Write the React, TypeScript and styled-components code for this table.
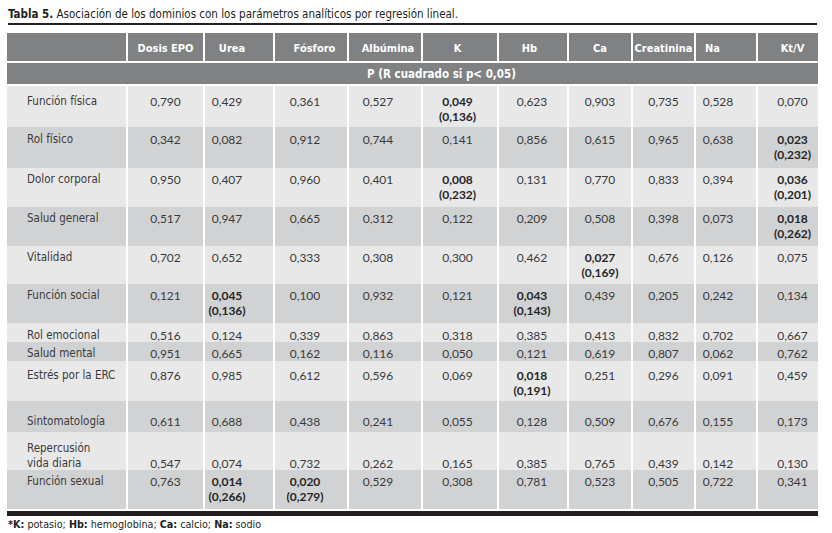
import React from "react";
import styled, { createGlobalStyle } from "styled-components";

const COND = `"DejaVu Sans Condensed", "DejaVu Sans", sans-serif`;
const NUM = `Lato, "Open Sans", sans-serif`;
const COLS = "119px 75px 68px 72px 72px 74px 68px 62px 61px 60px 60px";

const GlobalStyle = createGlobalStyle`
  html, body { margin: 0; padding: 0; background: #ffffff; }
  body { font-family: ${COND}; color: #3a3a3a; }
`;

const Page = styled.div`
  width: 811px;
  padding: 6px 0 0 7px;
`;

const Title = styled.div`
  margin-left: 1px;
  font-family: ${COND};
  font-stretch: condensed;
  font-size: 11.5px;
  line-height: 16px;
  color: #231f20;
  padding-bottom: 1px;
  border-bottom: 2px solid #231f20;
  width: 809px;
  b { font-weight: 700; }
`;

const Table = styled.div`
  margin-top: 8px;
  display: flex;
  flex-direction: column;
`;

const HeadRow = styled.div`
  display: grid;
  grid-template-columns: ${COLS};
  column-gap: 2px;
  height: 28px;
`;

const HeadCell = styled.div<{ $shift?: number }>`
  background: #808183;
  color: #ffffff;
  font-family: ${COND};
  font-stretch: condensed;
  font-weight: 700;
  font-size: 11px;
  display: flex;
  align-items: center;
  justify-content: center;
  padding-top: 3px;
  box-sizing: border-box;
  padding-left: ${(p) => Math.max(0, (p.$shift ?? 0) * 2)}px;
  padding-right: ${(p) => Math.max(0, -(p.$shift ?? 0) * 2)}px;
  white-space: nowrap;
`;

const SubHead = styled.div`
  margin-top: 2px;
  height: 21px;
  background: #808183;
  color: #ffffff;
  font-family: ${COND};
  font-stretch: condensed;
  font-weight: 700;
  font-size: 11.5px;
  display: flex;
  align-items: center;
  justify-content: center;
  padding-left: 58px;
  padding-top: 1px;
  box-sizing: border-box;
`;

const Body = styled.div`
  margin-top: 2px;
  display: flex;
  flex-direction: column;
`;

const Row = styled.div<{ $h: number }>`
  display: grid;
  grid-template-columns: ${COLS};
  column-gap: 2px;
  height: ${(p) => p.$h}px;
`;

const LabelCell = styled.div<{ $bg: string; $pt: number }>`
  background: ${(p) => p.$bg};
  padding: ${(p) => p.$pt}px 0 0 20px;
  font-family: ${COND};
  font-stretch: condensed;
  font-size: 11.5px;
  line-height: 15px;
  color: #3a3a3a;
  white-space: pre;
  box-sizing: border-box;
  overflow: visible;
`;

const NumCell = styled.div<{ $bg: string; $pt: number; $shift: number }>`
  background: ${(p) => p.$bg};
  padding-top: ${(p) => p.$pt}px;
  padding-left: ${(p) => Math.max(0, p.$shift * 2)}px;
  padding-right: ${(p) => Math.max(0, -p.$shift * 2)}px;
  text-align: center;
  font-family: ${NUM};
  font-size: 12px;
  line-height: 15px;
  color: #3a3a3a;
  box-sizing: border-box;
  white-space: nowrap;
`;

const Strong = styled.span`
  font-weight: 700;
  color: #262626;
`;

const Bar = styled.div`
  margin-top: 2px;
  height: 5px;
  background: #231f20;
`;

const Foot = styled.div`
  margin: 2px 0 0 1px;
  font-family: ${COND};
  font-stretch: condensed;
  font-size: 10.7px;
  line-height: 14px;
  color: #231f20;
  b { font-weight: 700; }
`;

type Val = string | [string, string];

interface RowData {
  label: string;
  h: number;
  pt: number;
  nt?: number;
  vals: Val[];
}

const headers = [
  { t: "Dosis EPO", hs: 0, bs: 0 },
  { t: "Urea", hs: -7, bs: -12 },
  { t: "Fósforo", hs: 3.5, bs: -6 },
  { t: "Albúmina", hs: 3, bs: -7 },
  { t: "K", hs: -2.5, bs: -2.5 },
  { t: "Hb", hs: -3.5, bs: -1 },
  { t: "Ca", hs: 0, bs: 0 },
  { t: "Creatinina", hs: 0, bs: 0 },
  { t: "Na", hs: -13.5, bs: -8 },
  { t: "Kt/V", hs: 4.5, bs: 4.5 },
];

const rows: RowData[] = [
  { label: "Función física", h: 41, pt: 8, vals: ["0,790", "0,429", "0,361", "0,527", ["0,049", "(0,136)"], "0,623", "0,903", "0,735", "0,528", "0,070"] },
  { label: "Rol físico", h: 41, pt: 5, vals: ["0,342", "0,082", "0,912", "0,744", "0,141", "0,856", "0,615", "0,965", "0,638", ["0,023", "(0,232)"]] },
  { label: "Dolor corporal", h: 39, pt: 4, vals: ["0,950", "0,407", "0,960", "0,401", ["0,008", "(0,232)"], "0,131", "0,770", "0,833", "0,394", ["0,036", "(0,201)"]] },
  { label: "Salud general", h: 39, pt: 4, vals: ["0,517", "0,947", "0,665", "0,312", "0,122", "0,209", "0,508", "0,398", "0,073", ["0,018", "(0,262)"]] },
  { label: "Vitalidad", h: 38, pt: 4, vals: ["0,702", "0,652", "0,333", "0,308", "0,300", "0,462", ["0,027", "(0,169)"], "0,676", "0,126", "0,075"] },
  { label: "Función social", h: 39, pt: 4, vals: ["0,121", ["0,045", "(0,136)"], "0,100", "0,932", "0,121", ["0,043", "(0,143)"], "0,439", "0,205", "0,242", "0,134"] },
  { label: "Rol emocional", h: 19, pt: 5, vals: ["0,516", "0,124", "0,339", "0,863", "0,318", "0,385", "0,413", "0,832", "0,702", "0,667"] },
  { label: "Salud mental", h: 19, pt: 4, vals: ["0,951", "0,665", "0,162", "0,116", "0,050", "0,121", "0,619", "0,807", "0,062", "0,762"] },
  { label: "Estrés por la ERC", h: 40, pt: 7, vals: ["0,876", "0,985", "0,612", "0,596", "0,069", ["0,018", "(0,191)"], "0,251", "0,296", "0,091", "0,459"] },
  { label: "Sintomatología", h: 31, pt: 13, vals: ["0,611", "0,688", "0,438", "0,241", "0,055", "0,128", "0,509", "0,676", "0,155", "0,173"] },
  { label: "Repercusión\nvida diaria", h: 38, pt: 9, nt: 24, vals: ["0,547", "0,074", "0,732", "0,262", "0,165", "0,385", "0,765", "0,439", "0,142", "0,130"] },
  { label: "Función sexual", h: 39, pt: 4, vals: ["0,763", ["0,014", "(0,266)"], ["0,020", "(0,279)"], "0,529", "0,308", "0,781", "0,523", "0,505", "0,722", "0,341"] },
];

const LIGHT = "#e8e8e9";
const DARK = "#d1d2d3";

export default function App() {
  return (
    <>
      <GlobalStyle />
      <Page>
        <Title>
          <b>Tabla 5.</b> Asociación de los dominios con los parámetros analíticos por regresión lineal.
        </Title>
        <Table>
          <HeadRow>
            <HeadCell />
            {headers.map((h) => (
              <HeadCell key={h.t} $shift={h.hs}>
                {h.t}
              </HeadCell>
            ))}
          </HeadRow>
          <SubHead>P (R cuadrado si p&lt; 0,05)</SubHead>
          <Body>
            {rows.map((r, i) => {
              const bg = i % 2 === 0 ? LIGHT : DARK;
              return (
                <Row key={r.label} $h={r.h}>
                  <LabelCell $bg={bg} $pt={r.pt}>
                    {r.label}
                  </LabelCell>
                  {r.vals.map((v, j) => (
                    <NumCell key={j} $bg={bg} $pt={r.nt ?? r.pt} $shift={headers[j].bs}>
                      {Array.isArray(v) ? (
                        <Strong>
                          {v[0]}
                          <br />
                          {v[1]}
                        </Strong>
                      ) : (
                        v
                      )}
                    </NumCell>
                  ))}
                </Row>
              );
            })}
          </Body>
          <Bar />
        </Table>
        <Foot>
          <b>*K:</b> potasio; <b>Hb:</b> hemoglobina; <b>Ca:</b> calcio; <b>Na:</b> sodio
        </Foot>
      </Page>
    </>
  );
}
